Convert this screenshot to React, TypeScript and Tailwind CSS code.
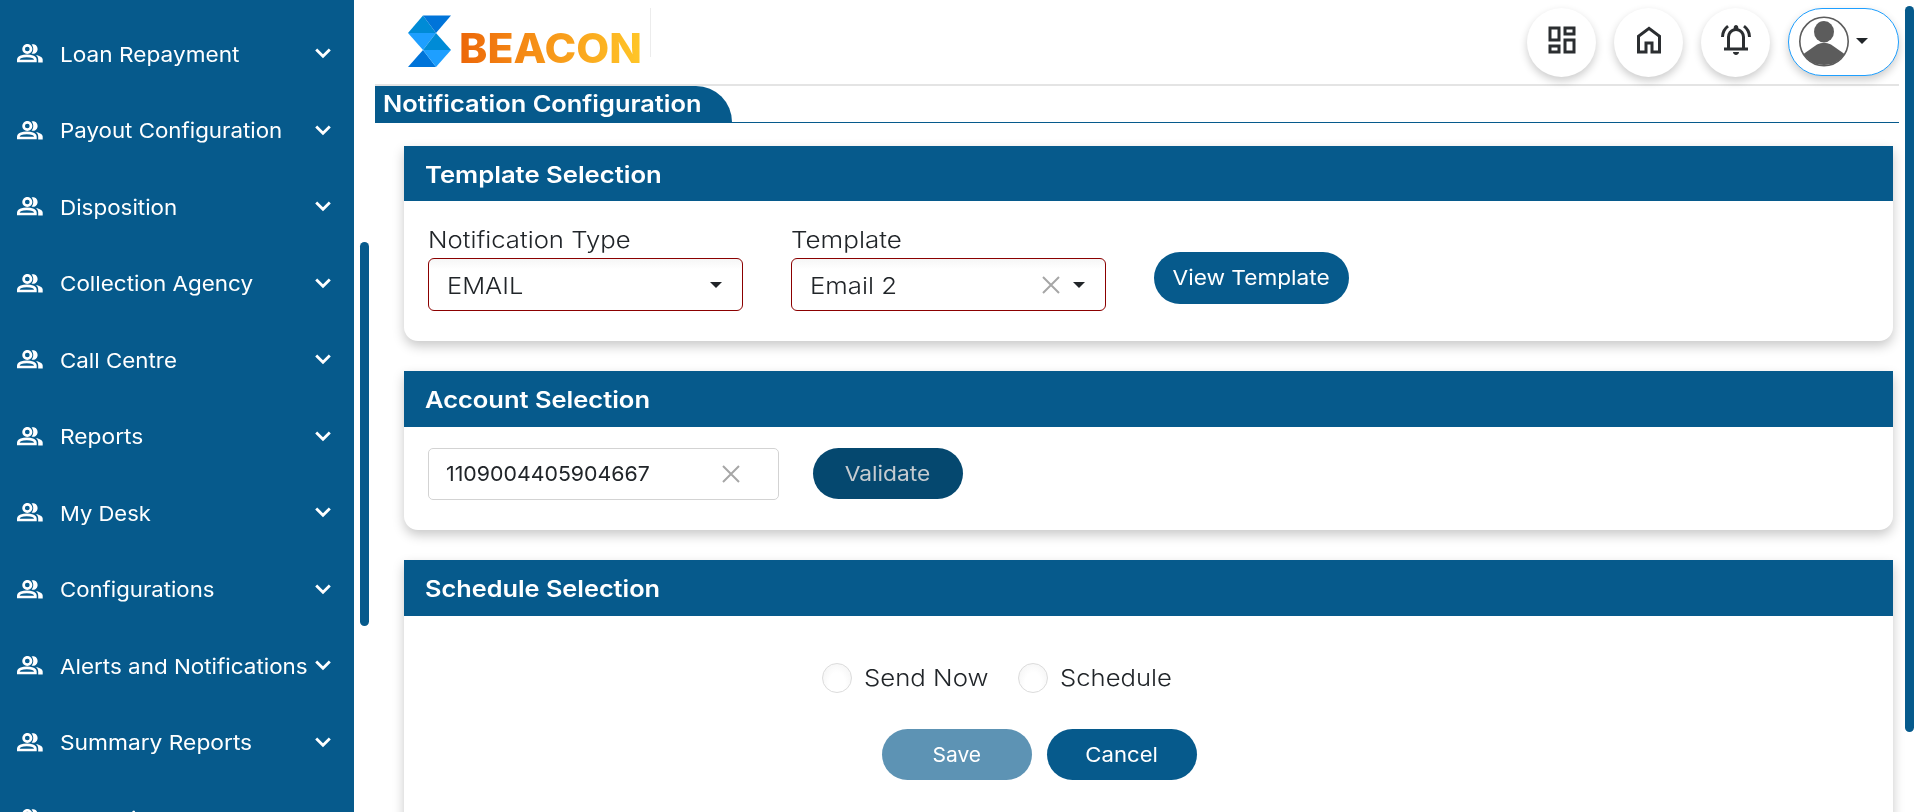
import type { ReactNode } from "react";

const menu = [
  { label: "Loan Repayment", stretch: "scale-x-[1.104]" },
  { label: "Payout Configuration", stretch: "scale-x-[1.088]" },
  { label: "Disposition", stretch: "scale-x-[1.093]" },
  { label: "Collection Agency", stretch: "scale-x-[1.095]" },
  { label: "Call Centre", stretch: "scale-x-[1.09]" },
  { label: "Reports", stretch: "scale-x-[1.11]" },
  { label: "My Desk", stretch: "scale-x-[1.072]" },
  { label: "Configurations", stretch: "scale-x-[1.082]" },
  { label: "Alerts and Notifications", stretch: "scale-x-[1.094]" },
  { label: "Summary Reports", stretch: "scale-x-[1.11]" },
  { label: "Analysis", stretch: "scale-x-[1.09]" },
];

function Wide({ stretch, children }: { stretch: string; children: ReactNode }) {
  return <span className={`inline-block origin-left whitespace-nowrap ${stretch}`}>{children}</span>;
}

function PeopleIcon() {
  return (
    <svg width="26" height="19" viewBox="0 0 26 19" className="shrink-0" fill="none" stroke="white" strokeWidth="2.7">
      <circle cx="10.3" cy="5" r="3.7" />
      <path d="M1.35 17v-1.2c0-2.7 4.6-3.9 8.5-3.9s8.5 1.2 8.5 3.9v1.2z" />
      <path d="M14.6 .4c3.6-1 6 1.6 6 4.6s-2.4 5.6-6 4.6c2.2-2.6 2.2-6.6 0-9.2z" fill="white" stroke="none" />
      <path d="M19 11c3.600.7 6.700 2.200 6.700 4.600v2.800h-4.500v-2.800c0-1.900-.8-3.400-2.200-4.600z" fill="white" stroke="none" />
    </svg>
  );
}

function Chevron() {
  return (
    <svg width="16" height="11" viewBox="0 0 16 11" className="shrink-0" fill="none" stroke="white" strokeWidth="2.8">
      <path d="M1.2 1.4 8 8.2l6.8-6.8" />
    </svg>
  );
}

function Caret() {
  return (
    <svg width="12" height="6" viewBox="0 0 12 6" className="shrink-0">
      <path d="M0 0h12L6 6z" fill="#212529" />
    </svg>
  );
}

function Cross() {
  return (
    <svg width="18" height="18" viewBox="0 0 18 18" className="shrink-0" fill="none" stroke="#a6a6a6" strokeWidth="2">
      <path d="M1 1l16 16M17 1 1 17" />
    </svg>
  );
}

function RoundButton({ children }: { children: ReactNode }) {
  return (
    <button className="flex h-[69px] w-[69px] items-center justify-center rounded-full bg-white pb-[5px] shadow-[0_4px_9px_rgba(0,0,0,0.2)]">
      {children}
    </button>
  );
}

function Card({ title, stretch, head, body, children }: { title: string; stretch: string; head: string; body: string; children: ReactNode }) {
  return (
    <section className="shrink-0 overflow-hidden rounded-b-[14px] bg-white shadow-[0_5px_12px_rgba(0,0,0,0.22)]">
      <h2 className={`flex items-center bg-[#065a8c] pl-[21px] pt-[3px] text-[23px] font-semibold text-white ${head}`}>
        <Wide stretch={stretch}>{title}</Wide>
      </h2>
      <div className={body}>{children}</div>
    </section>
  );
}

const pill = "flex items-center justify-center rounded-full pt-px text-[20.5px] leading-none";
const select = "flex h-[53px] items-center rounded-[6px] border border-[#8b0000] bg-linear-to-b from-[#f6f6f6] to-white to-20% pl-[18px] pr-[20px]";
const radio = "h-[30px] w-[30px] rounded-full border border-[#dcdcdc] bg-radial-[at_50%_70%] from-white from-40% to-[#f1f1f1]";

export default function App() {
  return (
    <div className="flex h-[812px] w-[1920px] overflow-hidden bg-white font-['Inter',sans-serif] text-[#212529]">
      <aside className="h-full w-[354px] shrink-0 overflow-hidden bg-[#065a8c] pt-[15.5px]">
        {menu.map((m) => (
          <div key={m.label} className="flex h-[76.5px] items-center pl-[17px] pr-[23px] text-white">
            <PeopleIcon />
            <div className="ml-[16.5px] w-0 flex-1 pt-[2px] text-[20.5px] leading-none">
              <Wide stretch={m.stretch}>{m.label}</Wide>
            </div>
            <Chevron />
          </div>
        ))}
      </aside>

      <div className="ml-[6px] mt-[242px] h-[384px] w-[9px] shrink-0 rounded-full bg-[#065a8c]" />

      <main className="ml-[6px] flex h-full w-[1524px] shrink-0 flex-col">
        <header className="flex h-[86px] shrink-0 items-start border-b-2 border-[#e4e4e4]">
          <div className="mt-2 flex h-[49px] w-[276px] border-r border-[#ececec] pl-[33px]">
            <svg width="43" height="53" viewBox="0 0 43 53" className="mt-[6.5px] shrink-0">
              <path d="M15 .5 0 18h28z" fill="#008bd6" />
              <path d="M15 .5h28L28 18z" fill="#0074d9" />
              <path d="M0 18h28L15 35z" fill="#1e9fff" />
              <path d="M28 18 43 35H15z" fill="#008bd6" />
              <path d="M15 35 28 52H0z" fill="#0074d9" />
              <path d="M15 35h28L28 52z" fill="#1e9fff" />
            </svg>
            <span className="ml-[8px] mt-[20px] h-12 origin-left scale-x-[1.055] bg-linear-to-r from-[#ec6608] to-[#ffc628] bg-clip-text text-[40.5px] leading-[41px] font-extrabold text-transparent">BEACON</span>
          </div>
          <div className="ml-auto mt-2 flex gap-[18px]">
            <RoundButton>
              <svg width="36" height="36" viewBox="0 0 24 24" fill="#2b2e31">
                <path d="M19 5v2h-4V5h4M9 5v6H5V5h4m10 8v6h-4v-6h4M9 17v2H5v-2h4M21 3h-8v6h8V3zM11 3H3v10h8V3zm10 8h-8v10h8V11zm-10 4H3v6h8v-6z" />
              </svg>
            </RoundButton>
            <RoundButton>
              <svg width="36" height="36" viewBox="0 0 24 24" fill="#2b2e31">
                <path d="M6 19h3v-6h6v6h3v-9l-6-4.5L6 10v9Zm-2 2V9l8-6 8 6v12h-7v-6h-2v6H4Z" />
              </svg>
            </RoundButton>
            <RoundButton>
              <svg width="36" height="36" viewBox="0 0 24 24" fill="#2b2e31">
                <path d="M4 19v-2h2v-7q0-2.075 1.250-3.688T10.500 4.200v-.7q0-.625.438-1.062T12 2t1.063.438T13.500 3.500v.7q2 .5 3.250 2.113T18 10v7h2v2H4Zm8 3q-.825 0-1.412-.587T10 20h4q0 .825-.587 1.413T12 22Zm-4-5h8v-7q0-1.650-1.175-2.825T12 6 9.175 7.175 8 10v7Zm-6-7q0-2.500 1.113-4.588T6.100 1.950l1.175 1.600q-1.500 1.100-2.387 2.775T4 10H2Zm18 0q0-2-.887-3.675T16.725 3.550L17.900 1.950q1.875 1.375 2.988 3.463T22 10h-2Z" />
              </svg>
            </RoundButton>
            <button className="flex h-[68px] w-[111px] items-center rounded-full border border-[#1e9fff] bg-white pl-[10px] shadow-[0_4px_9px_rgba(0,0,0,0.2)]">
              <svg width="50" height="51" viewBox="0 0 50 51" className="mb-[1px]">
                <path d="M4.5 38 18 28.5q7-3.5 14 0L45.5 38A24.5 24.5 0 0 1 4.5 38z" fill="#5c5c5c" />
                <ellipse cx="25" cy="15.8" rx="10" ry="10.7" fill="#5c5c5c" />
                <circle cx="25" cy="25.5" r="24.2" fill="none" stroke="#5c5c5c" strokeWidth="1.6" />
              </svg>
              <span className="mb-[2px] ml-[7px] flex"><Caret /></span>
            </button>
          </div>
        </header>

        <div className="flex h-[37px] shrink-0 border-b border-[#065a8c]">
          <h1 className="h-[37px] w-[357px] shrink-0 rounded-tr-[36px] bg-[#065a8c] pl-[8px] pt-[6px] text-[23px] leading-[24px] font-semibold text-white">
            <Wide stretch="scale-x-[1.104]">Notification Configuration</Wide>
          </h1>
        </div>

        <div className="ml-[29px] mt-[23px] flex w-[1489px] flex-col gap-[30px]">
          <Card title="Template Selection" stretch="scale-x-[1.115]" head="h-[55px]" body="flex h-[140px] pl-6 pt-[24px]">
            <div className="w-[315px] text-[23px] font-light">
              <label className="block h-[33px] leading-[30px]"><Wide stretch="scale-x-[1.117]">Notification Type</Wide></label>
              <div className={select}>
                <div className="flex-1 pt-[3px]"><Wide stretch="scale-x-[1.107]">EMAIL</Wide></div>
                <Caret />
              </div>
            </div>
            <div className="ml-12 w-[315px] text-[23px] font-light">
              <label className="block h-[33px] leading-[30px]"><Wide stretch="scale-x-[1.13]">Template</Wide></label>
              <div className={select}>
                <div className="flex-1 pt-[3px]"><Wide stretch="scale-x-[1.12]">Email 2</Wide></div>
                <Cross />
                <span className="ml-[13px] flex"><Caret /></span>
              </div>
            </div>
            <button className={`${pill} ml-12 mt-[27px] h-[52px] w-[195px] bg-[#065a8c] text-white`}>
              <span className="scale-x-[1.105]">View Template</span>
            </button>
          </Card>

          <Card title="Account Selection" stretch="scale-x-[1.108]" head="h-[56px]" body="flex h-[103px] pl-6 pt-[21px]">
            <div className="flex h-[52px] w-[351px] items-center rounded-[5px] border border-[#d3d3d3] pl-[17px] pr-[38px]">
              <div className="flex-1 text-[20.5px] leading-none"><Wide stretch="scale-x-[1.04]">1109004405904667</Wide></div>
              <Cross />
            </div>
            <button className={`${pill} ml-[34px] h-[51px] w-[150px] bg-[#05486f] text-[#c5cbd0]`}>
              <span className="scale-x-[1.11]">Validate</span>
            </button>
          </Card>

          <Card title="Schedule Selection" stretch="scale-x-[1.1]" head="h-[56px]" body="h-[260px] pt-[47px]">
            <div className="flex h-[30px] items-center pl-[418px] text-[23px] font-light">
              <span className={radio} />
              <div className="ml-[11.5px] w-[154.5px]"><Wide stretch="scale-x-[1.12]">Send Now</Wide></div>
              <span className={radio} />
              <div className="ml-[11.5px]"><Wide stretch="scale-x-[1.115]">Schedule</Wide></div>
            </div>
            <div className="mt-[36px] flex gap-[15px] pl-[478px]">
              <button className={`${pill} h-[51px] w-[150px] bg-[#5d93b4] text-white`}>
                <span className="scale-x-[1.025]">Save</span>
              </button>
              <button className={`${pill} h-[51px] w-[150px] bg-[#065a8c] text-white`}>
                <span className="scale-x-[1.08]">Cancel</span>
              </button>
            </div>
          </Card>
        </div>
      </main>

      <div className="ml-[6px] mt-[6px] h-[726px] w-[9px] shrink-0 rounded-full bg-[#065a8c]" />
    </div>
  );
}
